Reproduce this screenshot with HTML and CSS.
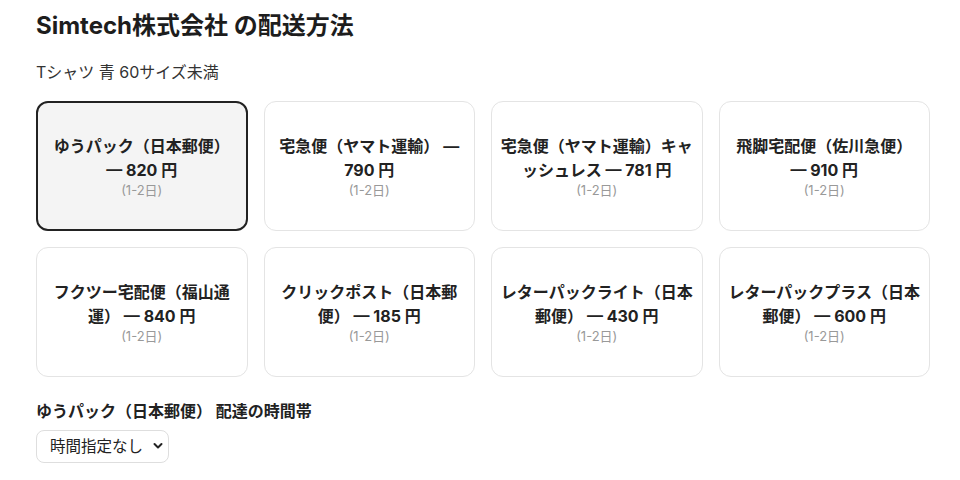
FILE: index.html
```html
<!DOCTYPE html>
<html lang="ja">
<head>
<meta charset="utf-8">
<link rel="stylesheet" href="styles.css">
</head>
<body>
<div class="page">
  <h1 class="title">Simtech株式会社 の配送方法</h1>
  <p class="subtitle">Tシャツ 青 60サイズ未満</p>
  <div class="grid">
    <div class="card selected"><div class="name">ゆうパック（日本郵便） — 820 円</div><div class="days">(1-2日)</div></div>
    <div class="card"><div class="name">宅急便（ヤマト運輸） — 790 円</div><div class="days">(1-2日)</div></div>
    <div class="card"><div class="name">宅急便（ヤマト運輸）キャッシュレス — 781 円</div><div class="days">(1-2日)</div></div>
    <div class="card"><div class="name">飛脚宅配便（佐川急便） — 910 円</div><div class="days">(1-2日)</div></div>
    <div class="card"><div class="name">フクツー宅配便（福山通運） — 840 円</div><div class="days">(1-2日)</div></div>
    <div class="card"><div class="name">クリックポスト（日本郵便） — 185 円</div><div class="days">(1-2日)</div></div>
    <div class="card"><div class="name">レターパックライト（日本郵便） — 430 円</div><div class="days">(1-2日)</div></div>
    <div class="card"><div class="name">レターパックプラス（日本郵便） — 600 円</div><div class="days">(1-2日)</div></div>
  </div>
  <div class="label">ゆうパック（日本郵便） 配達の時間帯</div>
  <div class="select-wrap">
    <select class="select">
      <option>時間指定なし</option>
    </select>
    <svg class="chev" width="10" height="8" viewBox="0 0 10 8"><path d="M1.5 2 L5 5.5 L8.5 2" fill="none" stroke="#222" stroke-width="2" stroke-linecap="round" stroke-linejoin="round"/></svg>
  </div>
</div>
</body>
</html>
```
FILE: styles.css
```css
* { box-sizing: border-box; }
body {
  margin: 0;
  background: #fff;
  color: #222;
  font-family: "Inter", "Noto Sans CJK JP", sans-serif;
}
.page {
  padding: 10px 30px 0 36px;
}
.title {
  margin: 0;
  font-size: 24px;
  line-height: 32px;
  font-weight: 700;
  color: #1d1d1d;
}
.subtitle {
  margin: 19px 0 0;
  font-size: 16px;
  line-height: 22px;
  color: #333;
}
.grid {
  margin-top: 18px;
  display: grid;
  grid-template-columns: repeat(4, 1fr);
  gap: 16px;
}
.card {
  height: 130px;
  border: 1px solid #e4e4e4;
  border-radius: 12px;
  background: #fff;
  display: flex;
  flex-direction: column;
  justify-content: center;
  align-items: center;
  text-align: center;
  padding: 0 8px;
}
.card.selected {
  border: 2px solid #222;
  background: #f4f4f4;
  padding: 0 7px;
}
.name {
  font-size: 16px;
  line-height: 24px;
  font-weight: 700;
  color: #222;
}
.days {
  font-size: 13px;
  line-height: 16px;
  color: #999;
}
.label {
  margin-top: 23px;
  font-size: 16px;
  line-height: 22px;
  font-weight: 700;
  color: #222;
}
.select-wrap {
  margin-top: 8px;
  position: relative;
  width: 133px;
}
.select {
  appearance: none;
  -webkit-appearance: none;
  width: 133px;
  height: 33px;
  border: 1px solid #dedede;
  border-radius: 8px;
  background: #fff;
  padding: 0 0 0 13px;
  font-family: "Inter", "Noto Sans CJK JP", sans-serif;
  font-size: 15.5px;
  color: #222;
}
.chev {
  position: absolute;
  right: 6px;
  top: 12px;
  pointer-events: none;
}
```
